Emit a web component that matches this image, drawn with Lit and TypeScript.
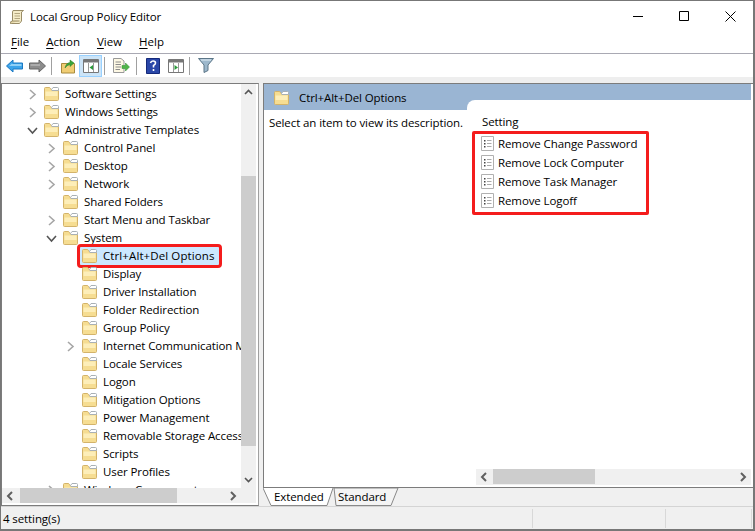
import { LitElement, html, css, svg } from "lit";
import { customElement } from "lit/decorators.js";

const folder = svg`<svg class="fld" width="15" height="14" viewBox="0 0 15 14"><path d="M.5 1.500V12.500Q.5 13.500 1.500 13.500H13.500Q14.500 13.500 14.500 12.500V3.500H8L6.500 1.500Q6 .5 5 .5H1.500Q.5 .5 .5 1.500Z" fill="#f6dd92" stroke="#d3b36a"/><path d="M7.500 2.500L9 .5H13.500Q14.500 .5 14.500 1.500V3.500H8Z" fill="#fff" stroke="#a9b0b5"/><path d="M1.500 4.500H13.500V9H1.500Z" fill="#fdeeb9"/></svg>`;
const chevR = svg`<svg width="9" height="11" viewBox="0 0 9 11"><path d="M2 1L7 5.500L2 10" fill="none" stroke="#a6a6a6" stroke-width="1.600"/></svg>`;
const chevD = svg`<svg width="11" height="9" viewBox="0 0 11 9"><path d="M1 2L5.500 7L10 2" fill="none" stroke="#555" stroke-width="1.600"/></svg>`;
const doc = svg`<svg width="13" height="15" viewBox="0 0 13 15"><path d="M.5.500H12.500V14.500H.5Z" fill="#fff" stroke="#b0b0b0"/><path d="M3 4h1.500v1.500H3zM3 7h1.500v1.500H3zM3 10h1.500v1.500H3z" fill="#444"/><path d="M6 4.500h4.500M6 7.500h4.500M6 10.500h4.500" stroke="#aaa"/></svg>`;
const arrL = svg`<svg width="8" height="10" viewBox="0 0 8 10"><path d="M6 1L2 5L6 9" fill="none" stroke="#606060" stroke-width="2"/></svg>`;
const arrR = svg`<svg width="8" height="10" viewBox="0 0 8 10"><path d="M2 1L6 5L2 9" fill="none" stroke="#606060" stroke-width="2"/></svg>`;

const tree: [number, string, string][] = [
  [0, "r", "Software Settings"], [0, "r", "Windows Settings"], [0, "d", "Administrative Templates"],
  [1, "r", "Control Panel"], [1, "r", "Desktop"], [1, "r", "Network"], [1, "", "Shared Folders"],
  [1, "r", "Start Menu and Taskbar"], [1, "d", "System"], [2, "", "Ctrl+Alt+Del Options"], [2, "", "Display"],
  [2, "", "Driver Installation"], [2, "", "Folder Redirection"], [2, "", "Group Policy"],
  [2, "r", "Internet Communication Management"], [2, "", "Locale Services"], [2, "", "Logon"],
  [2, "", "Mitigation Options"], [2, "", "Power Management"], [2, "", "Removable Storage Access"],
  [2, "", "Scripts"], [2, "", "User Profiles"], [1, "r", "Windows Components"],
];
const settings = ["Remove Change Password", "Remove Lock Computer", "Remove Task Manager", "Remove Logoff"];

@customElement("app-root")
export class AppRoot extends LitElement {
  static styles = css`
    :host { display: block; width: 755px; height: 531px; font: 11.5px/16px "Open Sans", "Noto Sans", sans-serif; letter-spacing: -.1px; color: #000; }
    * { box-sizing: border-box; }
    .win { width: 755px; height: 531px; display: flex; flex-direction: column; background: #fff; border: 1px solid #777; border-width: 1px 2px 2px 1px; overflow: hidden; }
    .title { height: 32px; display: flex; align-items: center; padding-left: 8px; flex: none; }
    .title .t { margin: -1px 0 0 5px; }
    .caps { margin-left: auto; display: flex; }
    .cap { width: 46px; height: 30px; display: flex; align-items: center; justify-content: center; margin-top: -1px; }
    .cap.m { width: 45px; }
    .menu { height: 21px; flex: none; display: flex; gap: 17px; padding: 0 0 2px 10px; align-items: center; border-bottom: 1px solid #a9a9b3; letter-spacing: 0; }
    .menu u { text-decoration-thickness: 1px; text-underline-offset: 2px; }
    .tools { height: 23px; flex: none; display: flex; align-items: center; padding-left: 2px; }
    .tb { width: 23px; height: 22px; display: flex; align-items: center; justify-content: center; }
    .tb.on { background: #cce4f7; border: 1px solid #99d1ff; }
    .sep { width: 1px; height: 18px; background: #a0a0a0; margin: 0 4px 0 2px; }
    .sep.w { margin-left: 4px; }
    .gap { height: 6px; flex: none; background: #eee; }
    .main { flex: 1; min-height: 0; display: flex; background: #f0f0f0; }
    .left { width: 258px; flex: none; border: 1px solid #7c7c7c; border-right-color: #a0a0a0; background: #fff; display: grid; grid-template: 1fr 15px / 1fr 15px; padding: 0 2px 2px 0; }
    .tree { overflow: hidden; padding-top: 1px; min-height: 0; min-width: 0; }
    .row { height: 18px; display: flex; align-items: center; white-space: nowrap; width: 239px; overflow: hidden; position: relative; }
    .arrow { width: 11px; display: flex; justify-content: center; flex: none; margin-right: 6px; }
    .row .fld { flex: none; margin-right: 6px; }
    .l0 { padding-left: 25px; } .l1 { padding-left: 44px; } .l2 { padding-left: 63px; }
    .row.sel { overflow: visible; }
    .sel .hl { position: absolute; left: 78px; width: 139px; top: 0; height: 18px; background: #cce8ff; outline: 3px solid #f41c1c; border-radius: 1px; }
    .sel .fld, .sel .lbl { position: relative; }
    .sel .lbl { letter-spacing: .1px; }
    .vbar { background: #f0f0f0; display: flex; flex-direction: column; align-items: center; justify-content: space-between; position: relative; padding: 5px 0; }
    .vbar .th { position: absolute; left: 0; right: 0; top: 92px; height: 270px; background: #cdcdcd; }
    .hbar { background: #f0f0f0; display: flex; align-items: center; position: relative; justify-content: space-between; padding: 0 4px; }
    .hbar .th { position: absolute; top: 0; bottom: 0; background: #cdcdcd; left: 18px; width: 157px; }
    .corner { background: #f0f0f0; }
    .right { flex: 1; margin-left: 4px; min-width: 0; display: flex; flex-direction: column; }
    .panel { flex: 1; min-height: 0; background: #fff; border: 1px solid #7c7c7c; border-right: 0; padding-right: 2px; display: flex; flex-direction: column; }
    .band { height: 26px; flex: none; background: #9ab5d3; display: flex; align-items: center; padding: 1px 0 0 10px; gap: 10px; }
    .band2 { flex: 1; min-height: 0; display: flex; }
    .desc { width: 203px; flex: none; padding: 5px 0 0 5px; white-space: nowrap; }
    .set { flex: 1; min-width: 0; background: #fff; margin-top: -10px; border-top-left-radius: 8px; display: flex; flex-direction: column; }
    .sh { height: 31px; padding: 14px 0 0 15px; flex: none; }
    .list { margin-left: 5px; width: 177px; height: 84px; outline: 3px solid #f41c1c; outline-offset: -3px; border-radius: 2px; padding: 3px 0 0 9px; flex: none; }
    .it { height: 19px; display: flex; align-items: center; gap: 4px; white-space: nowrap; }
    .hb2 { margin: auto 0 2px 9px; height: 16px; background: #f0f0f0; display: flex; align-items: center; justify-content: space-between; padding: 0 4px 0 4px; flex: none; position: relative; }
    .hb2 .th { position: absolute; top: 0; bottom: 1px; left: 17px; width: 102px; background: #cdcdcd; }
    .tabs { height: 18px; flex: none; display: flex; position: relative; }
    .tab { position: relative; height: 18px; display: flex; align-items: center; }
    .tab svg { position: absolute; left: 0; top: 0; }
    .tab span { position: relative; }
    .tab.a { width: 71px; padding-left: 11px; z-index: 1; }
    .tab.b { width: 71px; padding-left: 10px; margin-left: -6px; }
    .status { height: 23px; flex: none; border-top: 1px solid #d4d4d4; background: #f0f0f0; display: flex; align-items: center; padding: 2px 0 0 2px; position: relative; }
    .dv { position: absolute; top: 2px; bottom: 1px; width: 1px; background: #d8d8d8; }
  `;
  render() {
    return html`<div class="win">
      <div class="title">
        <svg width="16" height="16" viewBox="0 0 16 16"><path d="M4 1.500H14.500L12.500 3V12L10.500 14.500H1.500L3.500 12V3Z" fill="#f5ecc8" stroke="#9a8d68"/><path d="M5.500 4.500H11M5.500 7H11M5.500 9.500H11" stroke="#b3a67f"/><path d="M1.500 14.500Q1 12 3.500 12H10.500" fill="#e6d8a8" stroke="#9a8d68"/></svg>
        <span class="t">Local Group Policy Editor</span>
        <div class="caps">
          <div class="cap m"><svg width="11" height="11" viewBox="0 0 11 11"><path d="M0 5.500H10" stroke="#000"/></svg></div>
          <div class="cap"><svg width="11" height="11" viewBox="0 0 11 11"><path d="M.5.500H9.500V9.500H.5Z" fill="none" stroke="#000"/></svg></div>
          <div class="cap"><svg width="11" height="11" viewBox="0 0 11 11"><path d="M.5.500L10.500 10.500M10.500.500L.5 10.500" stroke="#000"/></svg></div>
        </div>
      </div>
      <div class="menu"><span><u>F</u>ile</span><span><u>A</u>ction</span><span><u>V</u>iew</span><span><u>H</u>elp</span></div>
      <div class="tools">
        <div class="tb"><svg width="17" height="14" viewBox="0 0 17 14"><path d="M.5 7L7 1V4H16.500V10H7V13Z" fill="#3ba4ea" stroke="#1a78c2"/><path d="M3 7L6 4.500V5H15.500V7H3Z" fill="#8fd0f7"/></svg></div>
        <div class="tb"><svg width="17" height="14" viewBox="0 0 17 14"><path d="M16.500 7L10 1V4H.5V10H10V13Z" fill="#8c8c8c" stroke="#666"/><path d="M1.500 5H11V7H1.500Z" fill="#ababab"/></svg></div>
        <div class="sep"></div>
        <div class="tb"><svg width="16" height="16" viewBox="0 0 16 16"><path d="M1.500 5.500H14.500V15H1.500Z" fill="#f0cd74" stroke="#a88a3d"/><path d="M5 10Q6 5 10 4.500V2L14 5L10 8.500V6.500Q7 7 5 10Z" fill="#3aa53a" stroke="#2a7f2a" stroke-width=".5"/></svg></div>
        <div class="tb on"><svg width="16" height="14" viewBox="0 0 16 14"><path d="M.5.500H15.500V13.500H.5Z" fill="#fff" stroke="#777"/><path d="M1 1H15V3.500H1Z" fill="#777"/><path d="M5.500 4V13M10.500 4V13" stroke="#999"/><path d="M10 6V11L6.500 8.500Z" fill="#2a9a3a"/></svg></div>
        <div class="sep"></div>
        <div class="tb"><svg width="18" height="17" viewBox="0 0 18 17"><path d="M1.500 1.500H9L12 4V15.500H1.500Z" fill="#fdf8e4" stroke="#999"/><path d="M3.500 5H9M3.500 7.500H9M3.500 10H9M3.500 12.500H8" stroke="#8c8c8c"/><path d="M10 8.500H13.500V6L17.500 10L13.500 14V11.500H10Z" fill="#4fb548" stroke="#2f8a2d" stroke-width=".5"/></svg></div>
        <div class="sep w"></div>
        <div class="tb"><svg width="14" height="16" viewBox="0 0 14 16"><path d="M.5.500H13.500V15.500H.5Z" fill="#2a47a8" stroke="#14297a"/><path d="M4.500 5Q5 3 7 3Q9.500 3 9.500 5Q9.500 6.500 7.500 7.500V9.500M7.500 11V13" fill="none" stroke="#fff" stroke-width="1.600"/></svg></div>
        <div class="tb"><svg width="16" height="14" viewBox="0 0 16 14"><path d="M.5.500H15.500V13.500H.5Z" fill="#fff" stroke="#777"/><path d="M1 1H15V3.500H1Z" fill="#777"/><path d="M5.500 4V13M10.500 4V13" stroke="#999"/><path d="M6.500 6V11L10 8.500Z" fill="#2a9a3a"/></svg></div>
        <div class="sep"></div>
        <div class="tb"><svg width="16" height="15" viewBox="0 0 16 15"><path d="M.5.500H15.500L10 7V12.500L6 14.500V7Z" fill="#9db8cc" stroke="#5c7688"/><path d="M3 2H13" stroke="#e4eff6"/></svg></div>
      </div>
      <div class="gap"></div>
      <div class="main">
        <div class="left">
          <div class="tree">
            ${tree.map(([l, a, t]) => {
              const sel = t.startsWith("Ctrl");
              return html`<div class="row l${l} ${sel ? "sel" : ""}">
                ${sel ? html`<div class="hl"></div>` : ""}
                <span class="arrow">${a === "r" ? chevR : a === "d" ? chevD : ""}</span>${folder}<span class="lbl">${t}</span>
              </div>`;
            })}
          </div>
          <div class="vbar">
            <svg width="9" height="6" viewBox="0 0 9 6"><path d="M1 5L4.500 1.500L8 5" fill="none" stroke="#555" stroke-width="1.600"/></svg>
            <div class="th"></div>
            <svg width="9" height="6" viewBox="0 0 9 6"><path d="M1 1L4.500 4.500L8 1" fill="none" stroke="#555" stroke-width="1.600"/></svg>
          </div>
          <div class="hbar">
            ${arrL}
            <div class="th"></div>
            ${arrR}
          </div>
          <div class="corner"></div>
        </div>
        <div class="right">
          <div class="panel">
            <div class="band">${folder}<span>Ctrl+Alt+Del Options</span></div>
            <div class="band2">
              <div class="desc">Select an item to view its description.</div>
              <div class="set">
                <div class="sh">Setting</div>
                <div class="list">${settings.map((s) => html`<div class="it">${doc}<span>${s}</span></div>`)}</div>
                <div class="hb2">${arrL}<div class="th"></div>${arrR}</div>
              </div>
            </div>
          </div>
          <div class="tabs">
            <div class="tab a"><svg width="71" height="18" viewBox="0 0 71 18"><path d="M0 0L8 17.500H64L70 0" fill="#fff" stroke="#888"/></svg><span>Extended</span></div>
            <div class="tab b"><svg width="71" height="18" viewBox="0 0 71 18"><path d="M6 0H70L63 17.500H8Z" fill="#f4f4f4" stroke="#888"/></svg><span>Standard</span></div>
          </div>
        </div>
      </div>
      <div class="status">4 setting(s)
        <div class="dv" style="left:531px"></div><div class="dv" style="left:664px"></div><div class="dv" style="left:750px"></div>
      </div>
    </div>`;
  }
}
